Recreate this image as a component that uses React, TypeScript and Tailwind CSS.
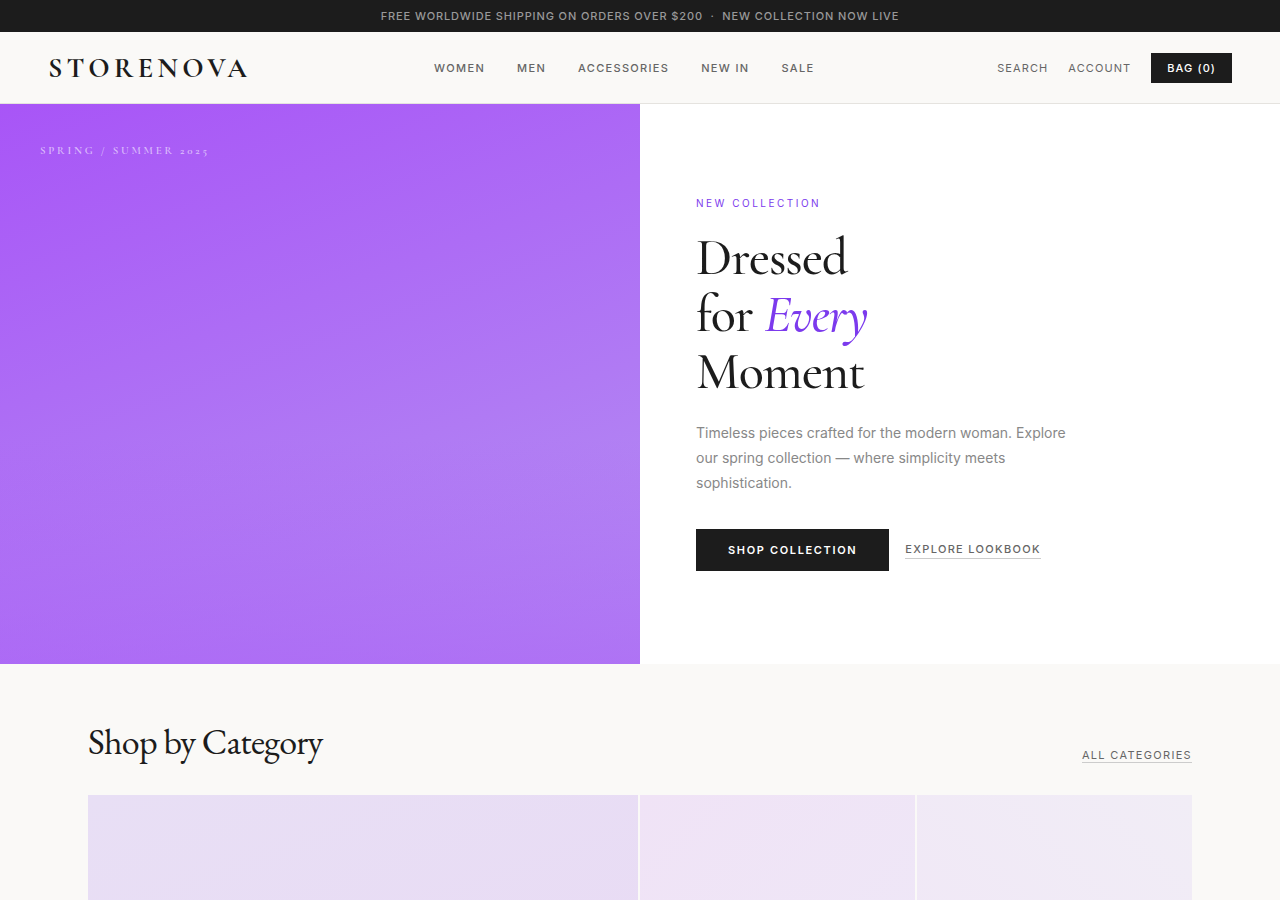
import { useState } from "react";

const navLinks = ["Women", "Men", "Accessories", "New In", "Sale"];

const categories = [
  { name: "Women", background: "bg-[linear-gradient(160deg,#e8dff5,#e9daf4)]" },
  { name: "Men", background: "bg-[linear-gradient(135deg,#f0e3f6,#eee8f7)]" },
  { name: "Accessories", background: "bg-[linear-gradient(225deg,#f1edf6,#f0e6f6)]" },
];

export default function App() {
  const [bagCount] = useState(0);

  return (
    <div className="min-h-screen bg-[#faf9f7] font-[Inter,sans-serif] text-[#1c1c1c]">
      <AnnouncementBar />
      <Header bagCount={bagCount} />
      <main>
        <Hero />
        <CategorySection />
      </main>
    </div>
  );
}

function AnnouncementBar() {
  return (
    <p className="bg-[#1c1c1c] py-2 text-center text-[11px] leading-4 font-medium tracking-[0.08em] text-[#999999] uppercase">
      Free worldwide shipping on orders over $200 &nbsp;·&nbsp; New collection
      now live
    </p>
  );
}

function Header({ bagCount }: { bagCount: number }) {
  return (
    <header className="flex h-18 items-center justify-between border-b border-[#e5e3df] px-12">
      <a
        href="#"
        className="font-['Cormorant_Garamond','Liberation_Serif',serif] text-[28px] leading-8 font-bold tracking-[0.15em]"
      >
        STORENOVA
      </a>
      <nav className="flex gap-8">
        {navLinks.map((link) => (
          <a
            key={link}
            href="#"
            className="text-[11px] leading-4 font-medium tracking-[0.12em] text-[#666666] uppercase"
          >
            {link}
          </a>
        ))}
      </nav>
      <div className="flex items-center gap-5 text-[11px] leading-[14px] text-[#666666]">
        <button type="button" className="tracking-[0.1em] uppercase">
          Search
        </button>
        <button type="button" className="tracking-[0.1em] uppercase">
          Account
        </button>
        <button
          type="button"
          className="bg-[#1c1c1c] px-4 py-2 font-medium tracking-[0.1em] text-white uppercase"
        >
          Bag ({bagCount})
        </button>
      </div>
    </header>
  );
}

function Hero() {
  return (
    <section className="grid min-h-[560px] grid-cols-2 bg-white">
      <div className="bg-[linear-gradient(to_top,rgba(168,85,247,0.5),rgba(168,85,247,0)_40%),linear-gradient(160deg,#a855f7,#b591f2)] p-10">
        <p className="font-['Cormorant_Garamond','Liberation_Serif',serif] text-[11px] leading-[14px] font-semibold tracking-[0.25em] text-white/60 uppercase">
          Spring / Summer 2025
        </p>
      </div>
      <div className="flex flex-col items-start justify-center px-14">
        <p className="mb-5 text-[10px] leading-3 tracking-[0.25em] text-[#7c3aed] uppercase">
          New Collection
        </p>
        <h1 className="mb-5 font-['Cormorant_Garamond','Liberation_Serif',serif] text-[52px] leading-[57px] font-medium tracking-[-0.02em]">
          Dressed
          <br />
          for <em className="text-[#7c3aed]">Every</em>
          <br />
          Moment
        </h1>
        <p className="mb-[34px] max-w-[380px] text-sm leading-[25px] text-[#888888]">
          Timeless pieces crafted for the modern woman. Explore our spring
          collection — where simplicity meets sophistication.
        </p>
        <div className="flex items-center gap-4">
          <button
            type="button"
            className="bg-[#1c1c1c] px-8 py-[14px] text-[11px] leading-[14px] font-semibold tracking-[0.15em] text-white uppercase"
          >
            Shop Collection
          </button>
          <a
            href="#"
            className="border-b border-[#cccccc] pb-[2px] text-[11px] leading-[14px] font-medium tracking-[0.12em] text-[#666666] uppercase"
          >
            Explore Lookbook
          </a>
        </div>
      </div>
    </section>
  );
}

function CategorySection() {
  return (
    <section className="mx-auto max-w-[1200px] px-12 pt-14">
      <div className="mb-8 flex items-end justify-between">
        <h2 className="font-['EB_Garamond','Liberation_Serif',serif] text-4xl leading-[43px] tracking-[-0.02em]">
          Shop by Category
        </h2>
        <a
          href="#"
          className="border-b border-[#cccccc] text-[11px] leading-[14px] tracking-[0.12em] text-[#666666] uppercase"
        >
          All Categories
        </a>
      </div>
      <div className="grid grid-cols-[2fr_1fr_1fr] gap-[2px]">
        {categories.map((category) => (
          <a
            key={category.name}
            href="#"
            aria-label={category.name}
            className={`h-[320px] ${category.background}`}
          />
        ))}
      </div>
    </section>
  );
}
